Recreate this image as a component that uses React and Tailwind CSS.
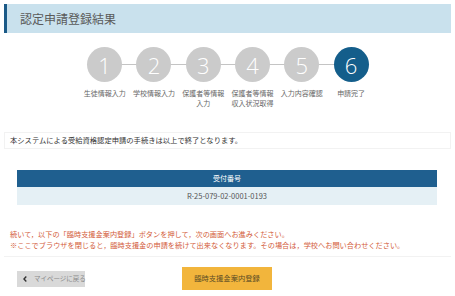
import React from "react";

const steps = [
  { n: "1", label: ["生徒情報入力"] },
  { n: "2", label: ["学校情報入力"] },
  { n: "3", label: ["保護者等情報", "入力"] },
  { n: "4", label: ["保護者等情報", "収入状況取得"] },
  { n: "5", label: ["入力内容確認"] },
  { n: "6", label: ["申請完了"], active: true },
];

export default function App() {
  return (
    <div
      className="w-[455px] h-[296px] bg-white overflow-hidden"
      style={{ fontFamily: '"Noto Sans CJK JP", "Noto Sans", sans-serif' }}
    >
      <div className="pt-[4px] px-[4px]">
        <div className="h-[29px] bg-[#c9e1ed] border-l-[3px] border-[#1b5a87] flex items-center pl-[13px]">
          <span className="text-[12px] text-[#5a5a5a] leading-none">認定申請登録結果</span>
        </div>
      </div>

      <div className="relative w-[296px] ml-[80px] mt-[14px]">
        <div className="absolute left-[24px] right-[24px] top-[17px] h-px bg-[#c4c4c4]" />
        <div className="relative flex">
          {steps.map((s) => (
            <div key={s.n} className="w-[49.3px] flex flex-col items-center">
              <div
                className={`w-[35px] h-[35px] rounded-full flex items-center justify-center text-white text-[22px] font-light leading-none ${
                  s.active ? "bg-[#145e8b]" : "bg-[#cbcbcb]"
                }`}
                style={{ fontFamily: '"Open Sans", sans-serif' }}
              >
                {s.n}
              </div>
              <div className="mt-[6px] text-[7px] leading-[10px] text-[#666] text-center whitespace-nowrap">
                {s.label.map((l, i) => (
                  <div key={i}>{l}</div>
                ))}
              </div>
            </div>
          ))}
        </div>
      </div>

      <div className="mx-[4px] mt-[24px] h-[17px] border border-[#f2f2f2] flex items-center pl-[5px]">
        <span className="text-[7.3px] text-[#333]">本システムによる受給資格認定申請の手続きは以上で終了となります。</span>
      </div>

      <div className="mx-[17px] w-[420px] mt-[21px]">
        <div className="h-[17px] bg-[#1f5f8f] flex items-center justify-center">
          <span className="text-[7px] text-white">受付番号</span>
        </div>
        <div className="h-[18px] bg-[#e5f0f5] flex items-center justify-center">
          <span className="text-[7.5px] text-[#555]">R-25-079-02-0001-0193</span>
        </div>
      </div>

      <div className="mx-[4px] mt-[24px] pb-[5px] pl-[6px] border-b border-[#f2f2f2] text-[7.2px] leading-[11px] text-[#d35c3a]">
        <div>続いて，以下の「臨時支援金案内登録」ボタンを押して，次の画面へお進みください。</div>
        <div>※ここでブラウザを閉じると，臨時支援金の申請を続けて出来なくなります。その場合は，学校へお問い合わせください。</div>
      </div>

      <div className="flex items-center mt-[10px] pl-[17px]">
        <div className="w-[68px] h-[16px] bg-[#d9d9d9] flex items-center pl-[6px] gap-[7px] whitespace-nowrap">
          <svg width="4" height="6" viewBox="0 0 4 6" className="shrink-0">
            <path d="M3.3 0.6 L1 3 L3.3 5.4" fill="none" stroke="#333" strokeWidth="1.4" />
          </svg>
          <span className="text-[6.5px] text-[#8a8a8a]">マイページに戻る</span>
        </div>
        <div className="ml-[97px] w-[90px] h-[23px] bg-[#f2b53c] flex items-center justify-center">
          <span className="text-[7.3px] text-[#5d4d25]">臨時支援金案内登録</span>
        </div>
      </div>
    </div>
  );
}
